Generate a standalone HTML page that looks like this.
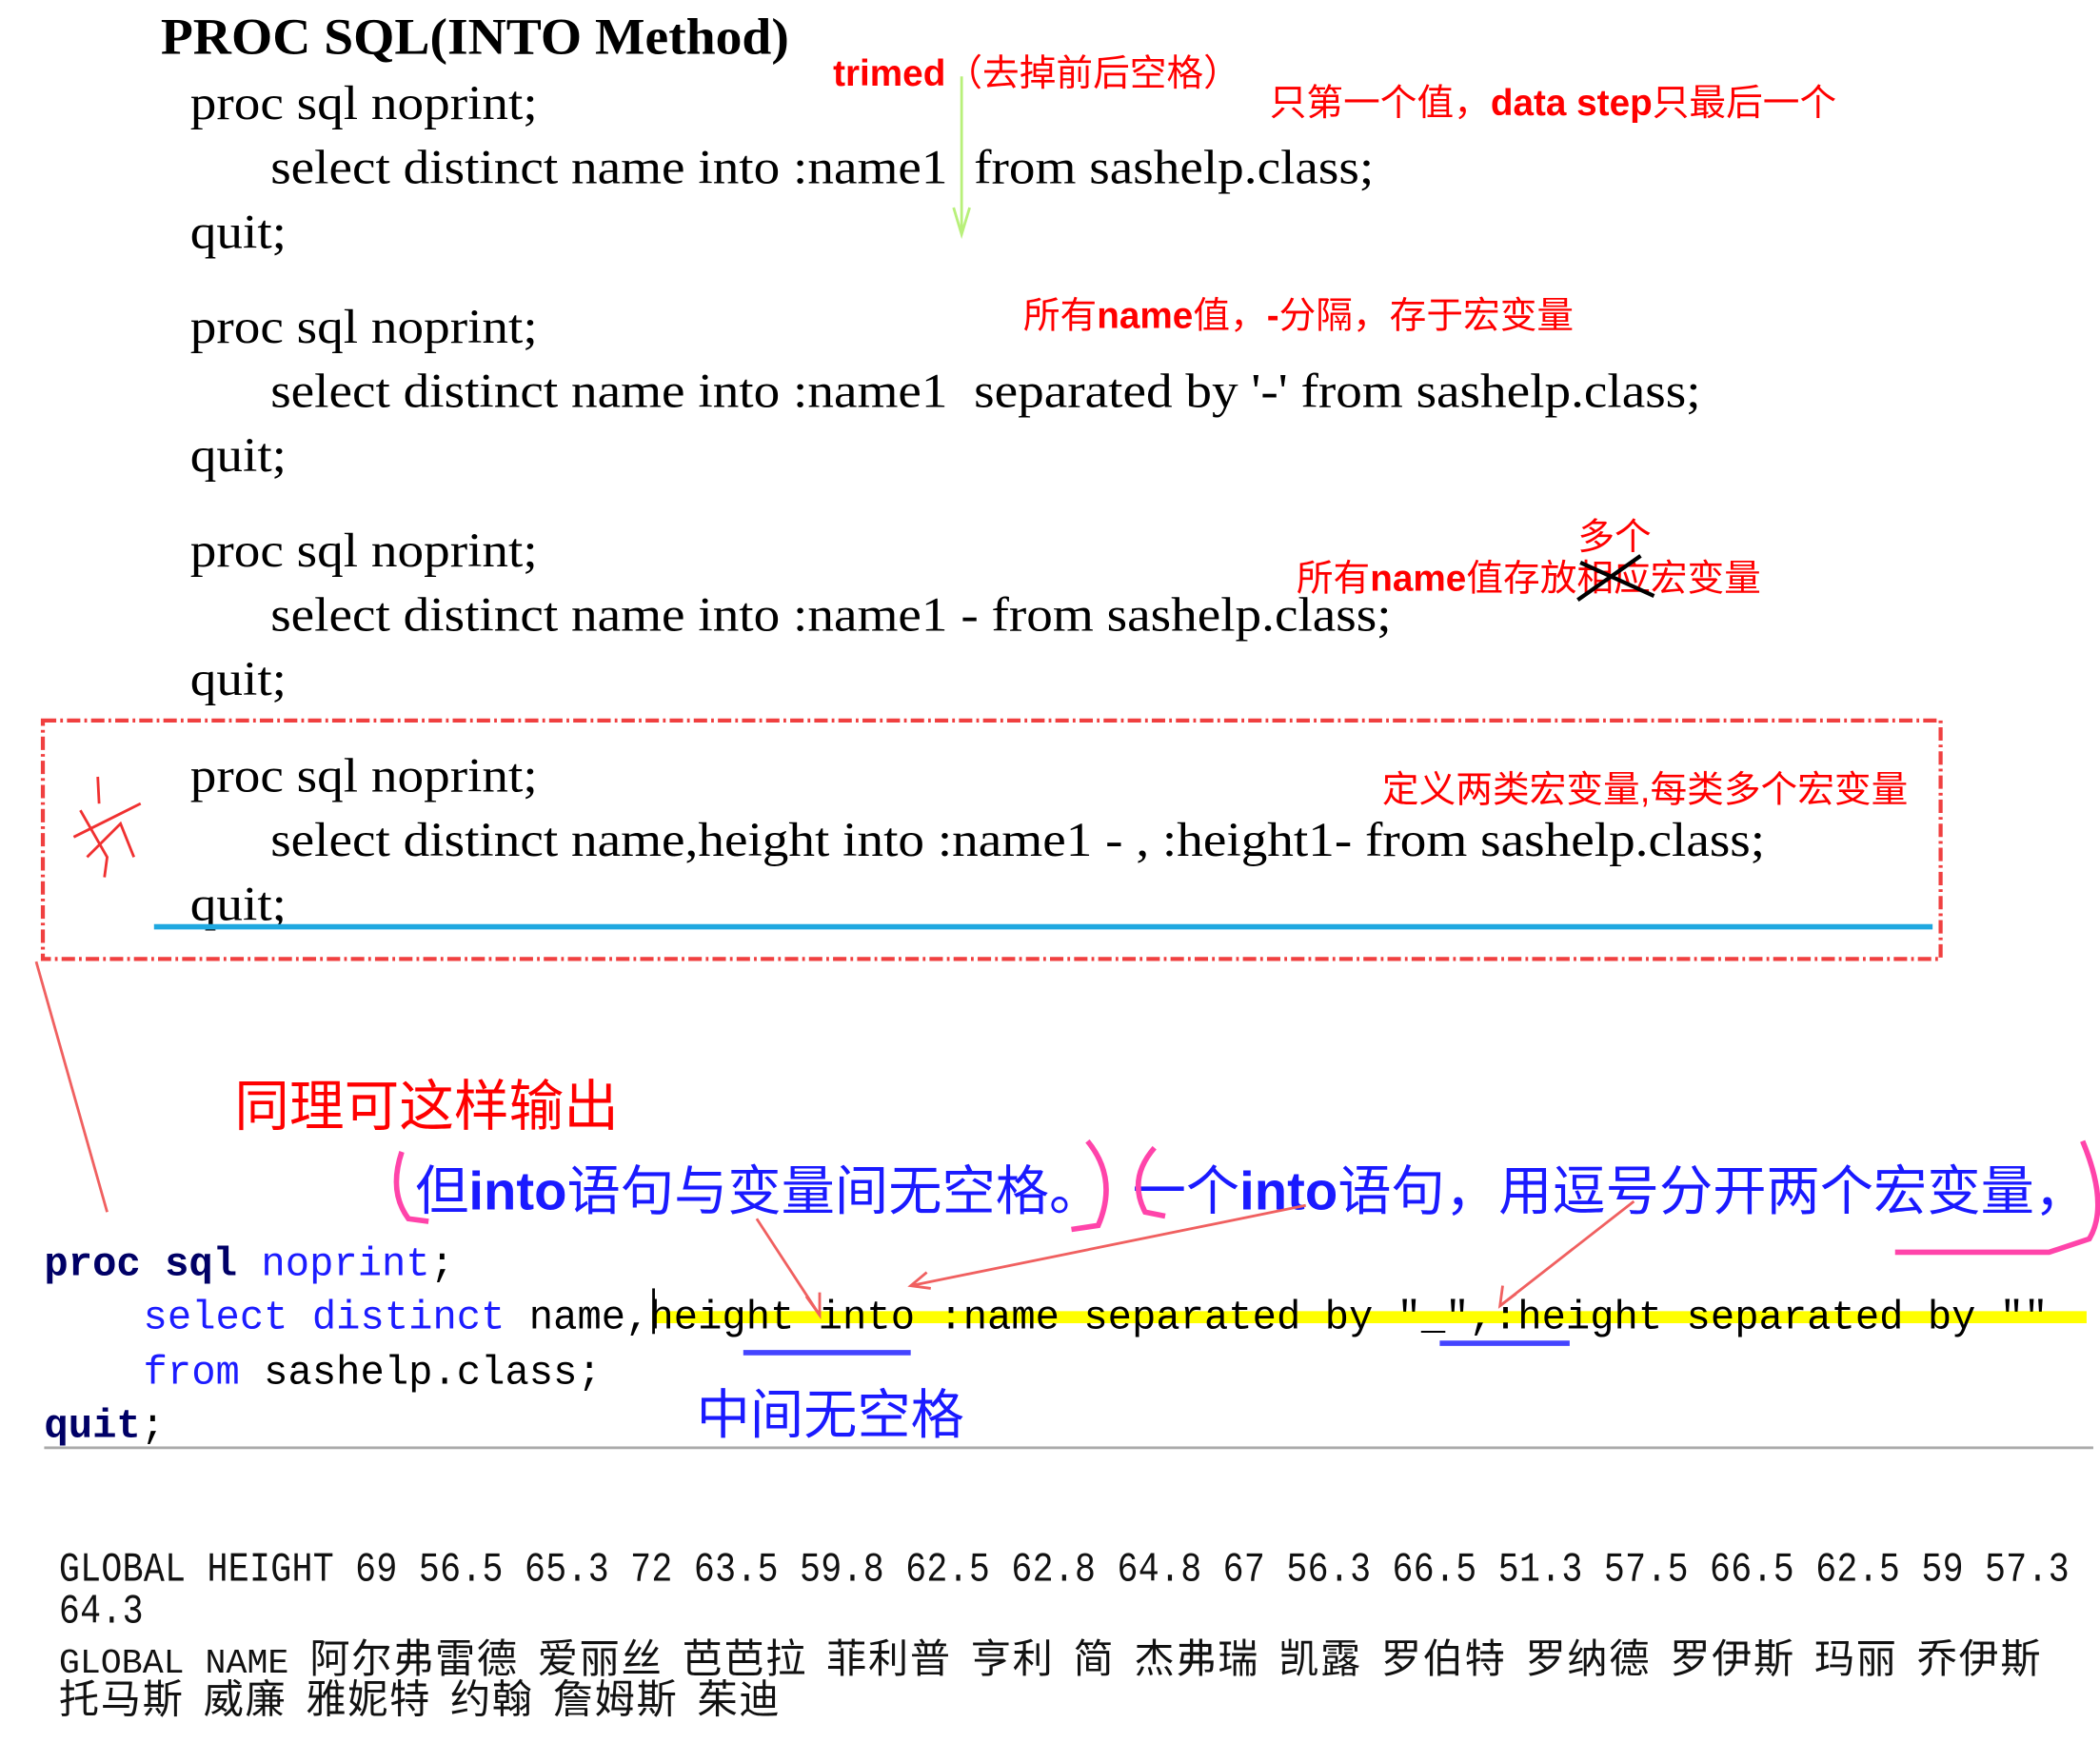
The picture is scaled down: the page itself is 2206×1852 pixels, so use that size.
<!DOCTYPE html>
<html><head><meta charset="utf-8">
<style>
html,body{margin:0;padding:0;background:#fff;width:2206px;height:1852px;overflow:hidden}
#s{position:absolute;left:0;top:0;width:1568px;height:1316px;transform:scale(1.40689);transform-origin:0 0}
.a{position:absolute;white-space:nowrap}
.sf{font-family:"Liberation Serif","Noto Serif CJK SC",serif;font-size:36px;color:#000;transform:scaleX(1.09);transform-origin:0 0}
.r{font-family:"Liberation Sans","Noto Sans CJK SC",sans-serif;color:#f00;font-size:27.5px}
.m{font-family:"Liberation Mono","Noto Sans CJK SC",monospace;font-size:30px;color:#000}
.o{font-family:"Liberation Mono","Noto Sans CJK SC",monospace;font-size:26px;color:#111;transform:scaleY(1.2);transform-origin:0 0;letter-spacing:0.2px}
.c{font-family:"Liberation Mono","Noto Sans CJK SC",monospace;font-size:30px;color:#111;letter-spacing:1.2px;word-spacing:-5px}
.c span{font-size:26px;letter-spacing:0;word-spacing:0}
.kw{color:#1c1cff}.nv{color:#000066;font-weight:bold}
</style></head><body><div id="s">
<div class="a sf" style="left:120px;top:6px;font-weight:bold;font-size:38px;transform:scaleX(1.04)">PROC SQL(INTO Method)</div>
<div class="a sf" style="left:142px;top:56px">proc sql noprint;</div>
<div class="a sf" style="left:202px;top:104px">select distinct name into :name1 &nbsp;from sashelp.class;</div>
<div class="a sf" style="left:142px;top:152px">quit;</div>
<div class="a sf" style="left:142px;top:223px">proc sql noprint;</div>
<div class="a sf" style="left:202px;top:271px">select distinct name into :name1 &nbsp;separated by '-' from sashelp.class;</div>
<div class="a sf" style="left:142px;top:319px">quit;</div>
<div class="a sf" style="left:142px;top:390px">proc sql noprint;</div>
<div class="a sf" style="left:202px;top:438px">select distinct name into :name1 - from sashelp.class;</div>
<div class="a sf" style="left:142px;top:486px">quit;</div>
<div class="a sf" style="left:142px;top:558px">proc sql noprint;</div>
<div class="a sf" style="left:202px;top:606px">select distinct name,height into :name1 - , :height1- from sashelp.class;</div>
<div class="a sf" style="left:142px;top:654px">quit;</div>

<div class="a r" style="left:622px;top:32px"><b>trimed</b>（去掉前后空格）</div>
<div class="a r" style="left:948px;top:54px">只第一个值，<b>data step</b>只最后一个</div>
<div class="a r" style="left:764px;top:213px">所有<b>name</b>值，<b>-</b>分隔，存于宏变量</div>
<div class="a r" style="left:1178px;top:378px">多个</div>
<div class="a r" style="left:968px;top:409px">所有<b>name</b>值存放相应宏变量</div>
<div class="a r" style="left:1032px;top:567px">定义两类宏变量,每类多个宏变量</div>

<div class="a r" style="left:175px;top:792px;font-size:41px">同理可这样输出</div>
<div class="a" style="left:310px;top:857px;font-family:'Liberation Sans','Noto Sans CJK SC',sans-serif;font-size:40px;color:#1a1aff">但<b>into</b>语句与变量间无空格。 &nbsp;一个<b>into</b>语句，用逗号分开两个宏变量，</div>
<div class="a" style="left:520px;top:1024px;font-family:'Liberation Sans','Noto Sans CJK SC',sans-serif;font-size:40px;color:#1a1aff">中间无空格</div>

<div class="a" style="left:487px;top:979px;width:1071px;height:9px;background:#ffff00"></div>
<div class="a m" style="left:33px;top:928px"><span class="nv">proc sql</span> <span class="kw">noprint</span>;</div>
<div class="a m" style="left:107px;top:968px"><span class="kw">select distinct</span> name,height into :name separated by "_",:height separated by ""</div>
<div class="a m" style="left:107px;top:1009px"><span class="kw">from</span> sashelp.class;</div>
<div class="a m" style="left:33px;top:1049px"><span class="nv">quit</span>;</div>
<div class="a" style="left:33px;top:1080px;width:1530px;height:2px;background:#aaa"></div>

<div class="a o" style="left:44px;top:1154px">GLOBAL HEIGHT 69 56.5 65.3 72 63.5 59.8 62.5 62.8 64.8 67 56.3 66.5 51.3 57.5 66.5 62.5 59 57.3</div>
<div class="a o" style="left:44px;top:1185px">64.3</div>
<div class="a c" style="left:44px;top:1214px"><span>GLOBAL NAME </span>阿尔弗雷德 爱丽丝 芭芭拉 菲利普 亨利 简 杰弗瑞 凯露 罗伯特 罗纳德 罗伊斯 玛丽 乔伊斯</div>
<div class="a c" style="left:44px;top:1244px">托马斯 威廉 雅妮特 约翰 詹姆斯 茱迪</div>

<svg class="a" style="left:0;top:0" width="1568" height="1316">
<line x1="718" y1="57" x2="718" y2="172" stroke="#b8f07a" stroke-width="2"/>
<path d="M712,155 L718,175 L724,155" fill="none" stroke="#b8f07a" stroke-width="2"/>
<rect x="32" y="538" width="1417" height="178" fill="none" stroke="#f04040" stroke-width="3" stroke-dasharray="10,3,2,3"/>
<line x1="115" y1="692" x2="1443" y2="692" stroke="#1fa8e0" stroke-width="4"/>
<path d="M1180,420 L1235,445 M1225,415 L1178,448" stroke="#000" stroke-width="3" fill="none"/>
<path d="M73,580 L74,600 M60,605 L80,640 L78,655 M55,625 L105,600 M65,640 L90,615 L100,640" stroke="#f03030" stroke-width="2" fill="none"/>
<line x1="27" y1="718" x2="80" y2="905" stroke="#f06060" stroke-width="2"/>
<path d="M300,860 Q290,890 305,910 L320,912" fill="none" stroke="#ff44aa" stroke-width="4"/>
<path d="M812,852 Q835,880 820,915 L800,918" fill="none" stroke="#ff44aa" stroke-width="4"/>
<path d="M862,857 Q842,880 855,905 L870,908" fill="none" stroke="#ff44aa" stroke-width="4"/>
<path d="M1555,852 Q1575,900 1560,925 L1530,935 L1415,935" fill="none" stroke="#ff44aa" stroke-width="4"/>
<path d="M565,910 L612,982 M975,900 L680,960 M1220,897 L1120,975" stroke="#f06060" stroke-width="2" fill="none"/>
<path d="M602,968 L612,982 L612,965 M692,950 L680,960 L695,962 M1122,960 L1120,975 L1132,966" stroke="#f06060" stroke-width="2" fill="none"/>
<line x1="555" y1="1010" x2="680" y2="1010" stroke="#4444ff" stroke-width="4"/>
<line x1="1075" y1="1003" x2="1172" y2="1003" stroke="#4444ff" stroke-width="4"/>
<line x1="488" y1="962" x2="488" y2="996" stroke="#000" stroke-width="2"/>
</svg>
</div></body></html>
